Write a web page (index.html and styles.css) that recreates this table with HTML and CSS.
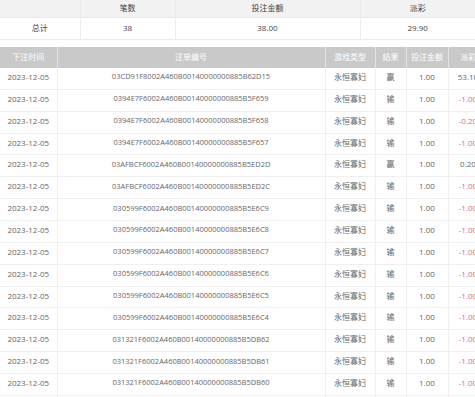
FILE: index.html
```html
<!DOCTYPE html>
<html lang="zh-CN">
<head>
    <meta charset="UTF-8">
    <title>注单记录</title>
    <link rel="stylesheet" href="styles.css">
</head>
<body>
    <div class="page">
        <table class="summary">
            <colgroup>
                <col style="width: 80px">
                <col style="width: 95px">
                <col style="width: 185px">
                <col>
            </colgroup>
            <tr class="summary-head">
                <th></th>
                <th>笔数</th>
                <th>投注金额</th>
                <th>派彩</th>
            </tr>
            <tr>
                <td>总计</td>
                <td>38</td>
                <td>38.00</td>
                <td>29.90</td>
            </tr>
        </table>

        <table class="bets">
            <colgroup>
                <col style="width: 57px">
                <col style="width: 268px">
                <col style="width: 50px">
                <col style="width: 31px">
                <col style="width: 42px">
                <col style="width: 40px">
            </colgroup>
            <thead>
                <tr>
                    <th>下注时间</th>
                    <th>注单编号</th>
                    <th>游戏类型</th>
                    <th>结果</th>
                    <th>投注金额</th>
                    <th>派彩</th>
                </tr>
            </thead>
            <tbody id="rows"></tbody>
        </table>
    </div>

    <script>
        var bets = [
            ['03CD91F8002A460B00140000000885B62D15', '赢', '53.10'],
            ['0394E7F6002A460B00140000000885B5F659', '输', '-1.00'],
            ['0394E7F6002A460B00140000000885B5F658', '输', '-0.20'],
            ['0394E7F6002A460B00140000000885B5F657', '输', '-1.00'],
            ['03AFBCF6002A460B00140000000885B5ED2D', '赢', '0.20'],
            ['03AFBCF6002A460B00140000000885B5ED2C', '输', '-1.00'],
            ['030599F6002A460B00140000000885B5E6C9', '输', '-1.00'],
            ['030599F6002A460B00140000000885B5E6C8', '输', '-1.00'],
            ['030599F6002A460B00140000000885B5E6C7', '输', '-1.00'],
            ['030599F6002A460B00140000000885B5E6C6', '输', '-1.00'],
            ['030599F6002A460B00140000000885B5E6C5', '输', '-1.00'],
            ['030599F6002A460B00140000000885B5E6C4', '输', '-1.00'],
            ['031321F6002A460B00140000000885B5DB62', '输', '-1.00'],
            ['031321F6002A460B00140000000885B5DB61', '输', '-1.00'],
            ['031321F6002A460B00140000000885B5DB60', '输', '-1.00'],
            ['031321F6002A460B00140000000885B5DB5F', '输', '-1.00']
        ];

        var body = document.getElementById('rows');
        bets.forEach(function(b) {
            var tr = document.createElement('tr');
            var cls = b[2].charAt(0) === '-' ? 'loss' : '';
            tr.innerHTML = '<td>2023-12-05</td><td class="bet-id">' + b[0] + '</td><td>永恒寡妇</td><td>' +
                b[1] + '</td><td>1.00</td><td class="' + cls + '">' + b[2] + '</td>';
            body.appendChild(tr);
        });
    </script>
</body>
</html>
```

FILE: styles.css
```css
* {
    margin: 0;
    padding: 0;
    box-sizing: border-box;
}
html, body {
    overflow: hidden;
    background: #fff;
    font-family: "Open Sans", "Noto Sans CJK SC", sans-serif;
    font-size: 8px;
    color: #555;
}
.page {
    width: 488px;
}
table {
    border-collapse: collapse;
    table-layout: fixed;
}
th, td {
    text-align: center;
    font-weight: normal;
    white-space: nowrap;
    overflow: hidden;
}
.summary {
    width: 475px;
    margin-bottom: 7px;
}
.summary th, .summary td {
    border: 1px solid #ebebeb;
    border-top: none;
}
.summary th:first-child, .summary td:first-child {
    border-left: none;
}
.summary th:last-child, .summary td:last-child {
    border-right: none;
}
.summary-head th {
    background: #f2f2f2;
    color: #444;
    height: 17px;
    padding-bottom: 2px;
}
.summary td {
    height: 22px;
    color: #444;
    padding-bottom: 2px;
}
.bets {
    width: 488px;
}
.bets th {
    background: #c9c9c9;
    color: #fff;
    height: 21px;
    padding-bottom: 2px;
    border-left: 1px solid #e4e4e4;
}
.bets th:first-child {
    border-left: none;
}
.bets td {
    height: 21.86px;
    padding-bottom: 4px;
    border: 1px solid #efefef;
    border-top: none;
    color: #666;
}
.bets td:first-child {
    border-left: none;
}
.bets td.bet-id {
    font-size: 7.5px;
}
.bets td.loss {
    color: #e06a7c;
}
```
